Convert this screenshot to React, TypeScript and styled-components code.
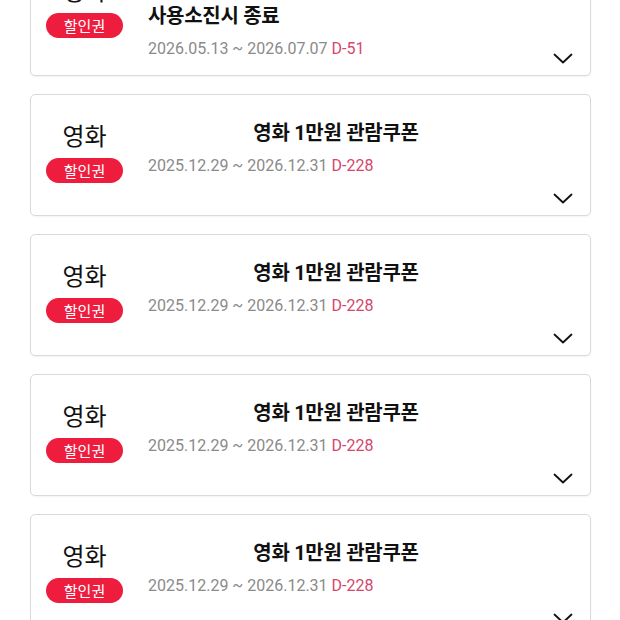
import React from "react";
import styled, { createGlobalStyle } from "styled-components";

const GlobalStyle = createGlobalStyle`
  html, body {
    margin: 0;
    padding: 0;
    background: #fff;
    font-family: Roboto, "Noto Sans CJK KR", sans-serif;
    overflow: hidden;
  }
`;

const CouponList = styled.div`
  display: flex;
  flex-direction: column;
  gap: 18px;
  margin: -51px 29px 0 30px;
`;

const Card = styled.div`
  position: relative;
  box-sizing: border-box;
  min-height: 122px;
  padding: 24px 0 15px;
  display: grid;
  grid-template-columns: 107px 1fr 66px;
  align-items: start;
  background: #fff;
  border: 1px solid #dadada;
  border-radius: 5px;
  box-shadow: 0 1px 2px rgba(0, 0, 0, 0.05);
`;

const Category = styled.div`
  display: flex;
  flex-direction: column;
  align-items: center;
  padding-top: 3px;
`;

const CategoryName = styled.div`
  font-size: 24px;
  line-height: 30px;
  color: #111;
`;

const Badge = styled.span`
  margin-top: 6px;
  height: 25px;
  padding: 0 18px;
  display: inline-flex;
  align-items: center;
  border-radius: 13px;
  background: #ee1d3e;
  color: #fff;
  font-size: 15px;
`;

const Info = styled.div`
  padding-left: 10px;
  display: flex;
  flex-direction: column;
`;

const Title = styled.div<{ $align: "left" | "center" }>`
  font-size: 20px;
  line-height: 28px;
  font-weight: 700;
  color: #111;
  text-align: ${(p) => p.$align};
  letter-spacing: -0.3px;
`;

const Period = styled.div`
  margin-top: 8px;
  font-size: 16px;
  line-height: 22px;
  color: #8a8a8a;
  white-space: nowrap;
`;

const DDay = styled.span`
  color: #d6466c;
`;

const ToggleButton = styled.button`
  position: absolute;
  right: 17px;
  bottom: 11px;
  padding: 0;
  border: 0;
  background: none;
  display: flex;
  line-height: 0;
`;

type Coupon = {
  title: string[];
  align: "left" | "center";
  from: string;
  to: string;
  dday: string;
};

const coupons: Coupon[] = [
  {
    title: ["영화 5천원 할인쿠폰", "사용소진시 종료"],
    align: "left",
    from: "2026.05.13",
    to: "2026.07.07",
    dday: "D-51",
  },
  ...Array.from({ length: 4 }, () => ({
    title: ["영화 1만원 관람쿠폰"],
    align: "center" as const,
    from: "2025.12.29",
    to: "2026.12.31",
    dday: "D-228",
  })),
];

function Chevron() {
  return (
    <svg width="20" height="11" viewBox="0 0 20 11" fill="none">
      <path
        d="M1.5 1.5 L10 9.5 L18.5 1.5"
        stroke="#111"
        strokeWidth="1.8"
        strokeLinecap="round"
        strokeLinejoin="round"
      />
    </svg>
  );
}

function CouponCard({ coupon }: { coupon: Coupon }) {
  return (
    <Card>
      <Category>
        <CategoryName>영화</CategoryName>
        <Badge>할인권</Badge>
      </Category>
      <Info>
        <Title $align={coupon.align}>
          {coupon.title.map((line, i) => (
            <div key={i}>{line}</div>
          ))}
        </Title>
        <Period>
          {coupon.from} ~ {coupon.to} <DDay>{coupon.dday}</DDay>
        </Period>
      </Info>
      <div />
      <ToggleButton aria-label="펼치기">
        <Chevron />
      </ToggleButton>
    </Card>
  );
}

export default function App() {
  return (
    <>
      <GlobalStyle />
      <CouponList>
        {coupons.map((c, i) => (
          <CouponCard key={i} coupon={c} />
        ))}
      </CouponList>
    </>
  );
}
